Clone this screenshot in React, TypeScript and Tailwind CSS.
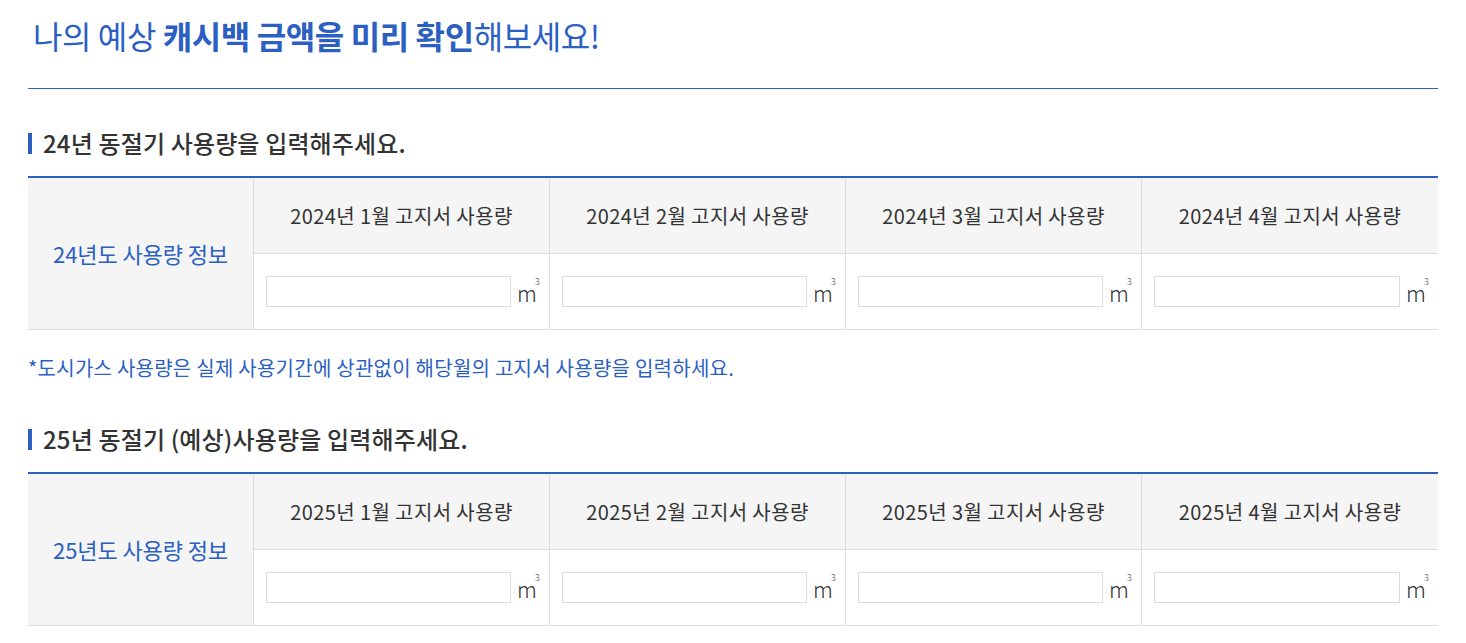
const font = { fontFamily: '"Noto Sans CJK KR", "Noto Sans", sans-serif' };

const months = [1, 2, 3, 4];

function UsageTable({ year, label }: { year: number; label: string }) {
  return (
    <div className="grid grid-cols-[226px_repeat(4,1fr)] border-t-2 border-[#2b5fc2] border-b border-b-[#dddddd]">
      <div className="row-span-2 flex items-center justify-center bg-[#f5f5f5] border-r border-[#dddddd] text-[22px] text-[#2b5fc2] tracking-[-0.1px]">
        {label}
      </div>
      {months.map((m, i) => (
        <div
          key={'h' + m}
          className={
            'h-[76px] flex items-center justify-center bg-[#f5f5f5] border-b border-[#dddddd] text-[20px] text-[#333333] tracking-[0.4px] ' +
            (i < 3 ? 'border-r' : '')
          }
        >
          {year}년 {m}월 고지서 사용량
        </div>
      ))}
      {months.map((m, i) => (
        <div
          key={'i' + m}
          className={'h-[75px] flex items-center gap-[6px] pl-3 pr-[11px] border-[#dddddd] ' + (i < 3 ? 'border-r' : '')}
        >
          <input type="text" className="flex-1 min-w-0 h-[31px] border border-[#dcdcdc] bg-white outline-none px-2" />
          <span className="w-[21px] shrink-0 text-[22px] font-light text-[#333333] leading-none whitespace-nowrap">
            m<sup className="text-[9px] -ml-[2px] align-[12px]">3</sup>
          </span>
        </div>
      ))}
    </div>
  );
}

function SectionTitle({ children }: { children: React.ReactNode }) {
  return (
    <h3 className="flex items-center gap-[11px] text-[24px] leading-[32px] font-medium text-[#333333] tracking-[0.15px]">
      <span className="w-[4px] h-[21px] bg-[#2b5fc2]" />
      {children}
    </h3>
  );
}

export default function App() {
  return (
    <div className="min-h-screen bg-white" style={font}>
      <div className="w-[1410px] ml-[28px]">
        <div className="pt-[11px] pb-[29px] pl-[5px] border-b border-[#2b5fc2]">
          <h2 className="text-[32px] text-[#2b5fc2] tracking-[-0.4px] leading-[48px]">
            나의 예상 <strong className="font-bold">캐시백 금액을 미리 확인</strong>해보세요!
          </h2>
        </div>

        <div className="mt-[38px]">
          <SectionTitle>24년 동절기 사용량을 입력해주세요.</SectionTitle>
        </div>
        <div className="mt-[17px]">
          <UsageTable year={2024} label="24년도 사용량 정보" />
        </div>

        <p className="mt-[23px] text-[20px] leading-[30px] text-[#2b5fc2] tracking-[0.25px]">
          *도시가스 사용량은 실제 사용기간에 상관없이 해당월의 고지서 사용량을 입력하세요.
        </p>

        <div className="mt-[40px]">
          <SectionTitle>25년 동절기 (예상)사용량을 입력해주세요.</SectionTitle>
        </div>
        <div className="mt-[17px]">
          <UsageTable year={2025} label="25년도 사용량 정보" />
        </div>
      </div>
    </div>
  );
}
